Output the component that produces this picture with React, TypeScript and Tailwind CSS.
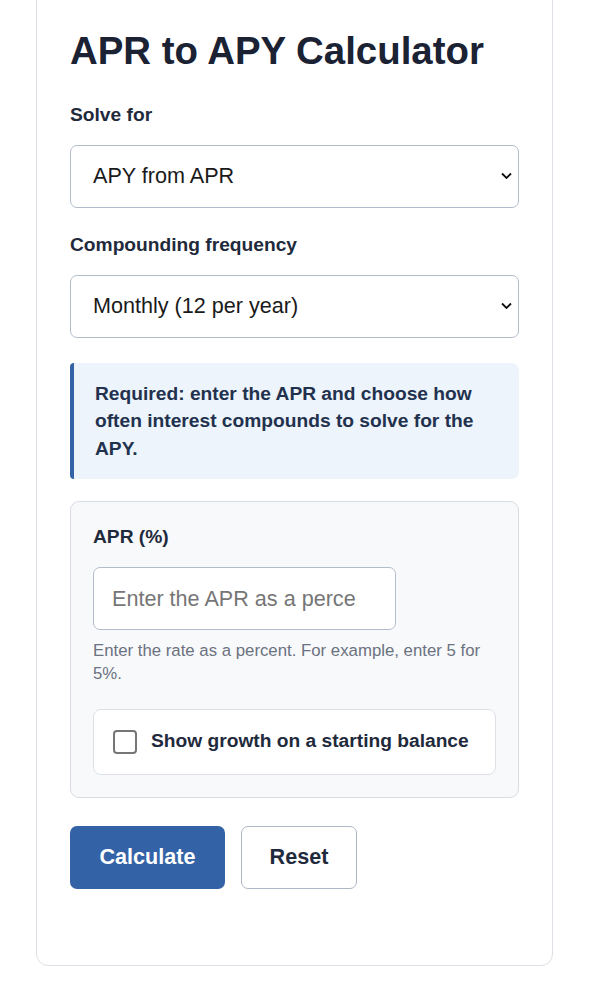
import React from 'react'

function Chevron() {
  return (
    <svg
      className="pointer-events-none absolute right-[7px] top-1/2 -translate-y-1/2"
      width="11"
      height="7"
      viewBox="0 0 11 7"
      fill="none"
    >
      <path d="M1 1l4.5 4.5L10 1" stroke="#111" strokeWidth="1.8" />
    </svg>
  )
}

function Field({ label, value }: { label: string; value: string }) {
  return (
    <div>
      <label className="block text-[19.2px] font-bold leading-[28.8px] text-[#1f2a3c]">{label}</label>
      <div className="relative mt-[15px]">
        <select
          defaultValue={value}
          className="h-[63px] w-full appearance-none rounded-[7px] border border-[#b3bccb] bg-white pl-[22px] pr-8 text-[21.6px] text-[#1a1a1a] outline-none"
        >
          <option>{value}</option>
        </select>
        <Chevron />
      </div>
    </div>
  )
}

export default function App() {
  return (
    <div className="min-h-[981px] bg-white font-['Liberation_Sans',Arial,sans-serif]">
      <div className="-mt-3 ml-[36px] w-[517px] rounded-xl border border-[#dcdfe5] bg-white px-[33px] pb-[76px] pt-[39px]">
        <h1 className="text-[38.4px] font-bold leading-[46px] text-[#1a2233]">APR to APY Calculator</h1>

        <div className="mt-[27px]">
          <Field label="Solve for" value="APY from APR" />
        </div>
        <div className="mt-[23px]">
          <Field label="Compounding frequency" value="Monthly (12 per year)" />
        </div>

        <div className="mt-[25px] rounded-r-[7px] rounded-l-[4px] border-l-4 border-[#3462a6] bg-[#edf4fc] py-[17px] pl-[21px] pr-[30px]">
          <p className="text-[19.2px] font-bold leading-[27.6px] text-[#22314d]">
            Required: enter the APR and choose how often interest compounds to solve for the APY.
          </p>
        </div>

        <div className="mt-[22px] rounded-[9px] border border-[#d9dde3] bg-[#f8f9fb] pb-[22px] pl-[22px] pr-[22px] pt-[21px]">
          <label className="block text-[19.2px] font-bold leading-[28.8px] text-[#1f2a3c]">APR (%)</label>
          <input
            placeholder="Enter the APR as a percentage"
            className="mt-[15px] h-[63px] w-[303px] rounded-[7px] border border-[#b3bccb] bg-white pl-[18px] pr-[38px] text-[21.6px] text-[#1a1a1a] outline-none placeholder:text-[#767676]"
          />
          <p className="mt-[10px] text-[16.8px] leading-[22.7px] text-[#6b7280]">
            Enter the rate as a percent. For example, enter 5 for 5%.
          </p>
          <div className="mt-[23px] flex h-[66px] items-center gap-[14px] rounded-[8px] border border-[#dde1e6] bg-white pl-[19px]">
            <span className="h-6 w-6 rounded-[4px] border-2 border-[#767676] bg-white" />
            <span className="text-[19.2px] font-bold text-[#1f2a3c]">Show growth on a starting balance</span>
          </div>
        </div>

        <div className="mt-[28px] flex gap-4">
          <button className="h-[63px] w-[155px] rounded-[7px] bg-[#3462a6] text-[21.6px] font-bold text-white">
            Calculate
          </button>
          <button className="h-[63px] w-[116px] rounded-[7px] border border-[#aeb7c5] bg-white text-[21.6px] font-bold text-[#1f2a3c]">
            Reset
          </button>
        </div>
      </div>
    </div>
  )
}
